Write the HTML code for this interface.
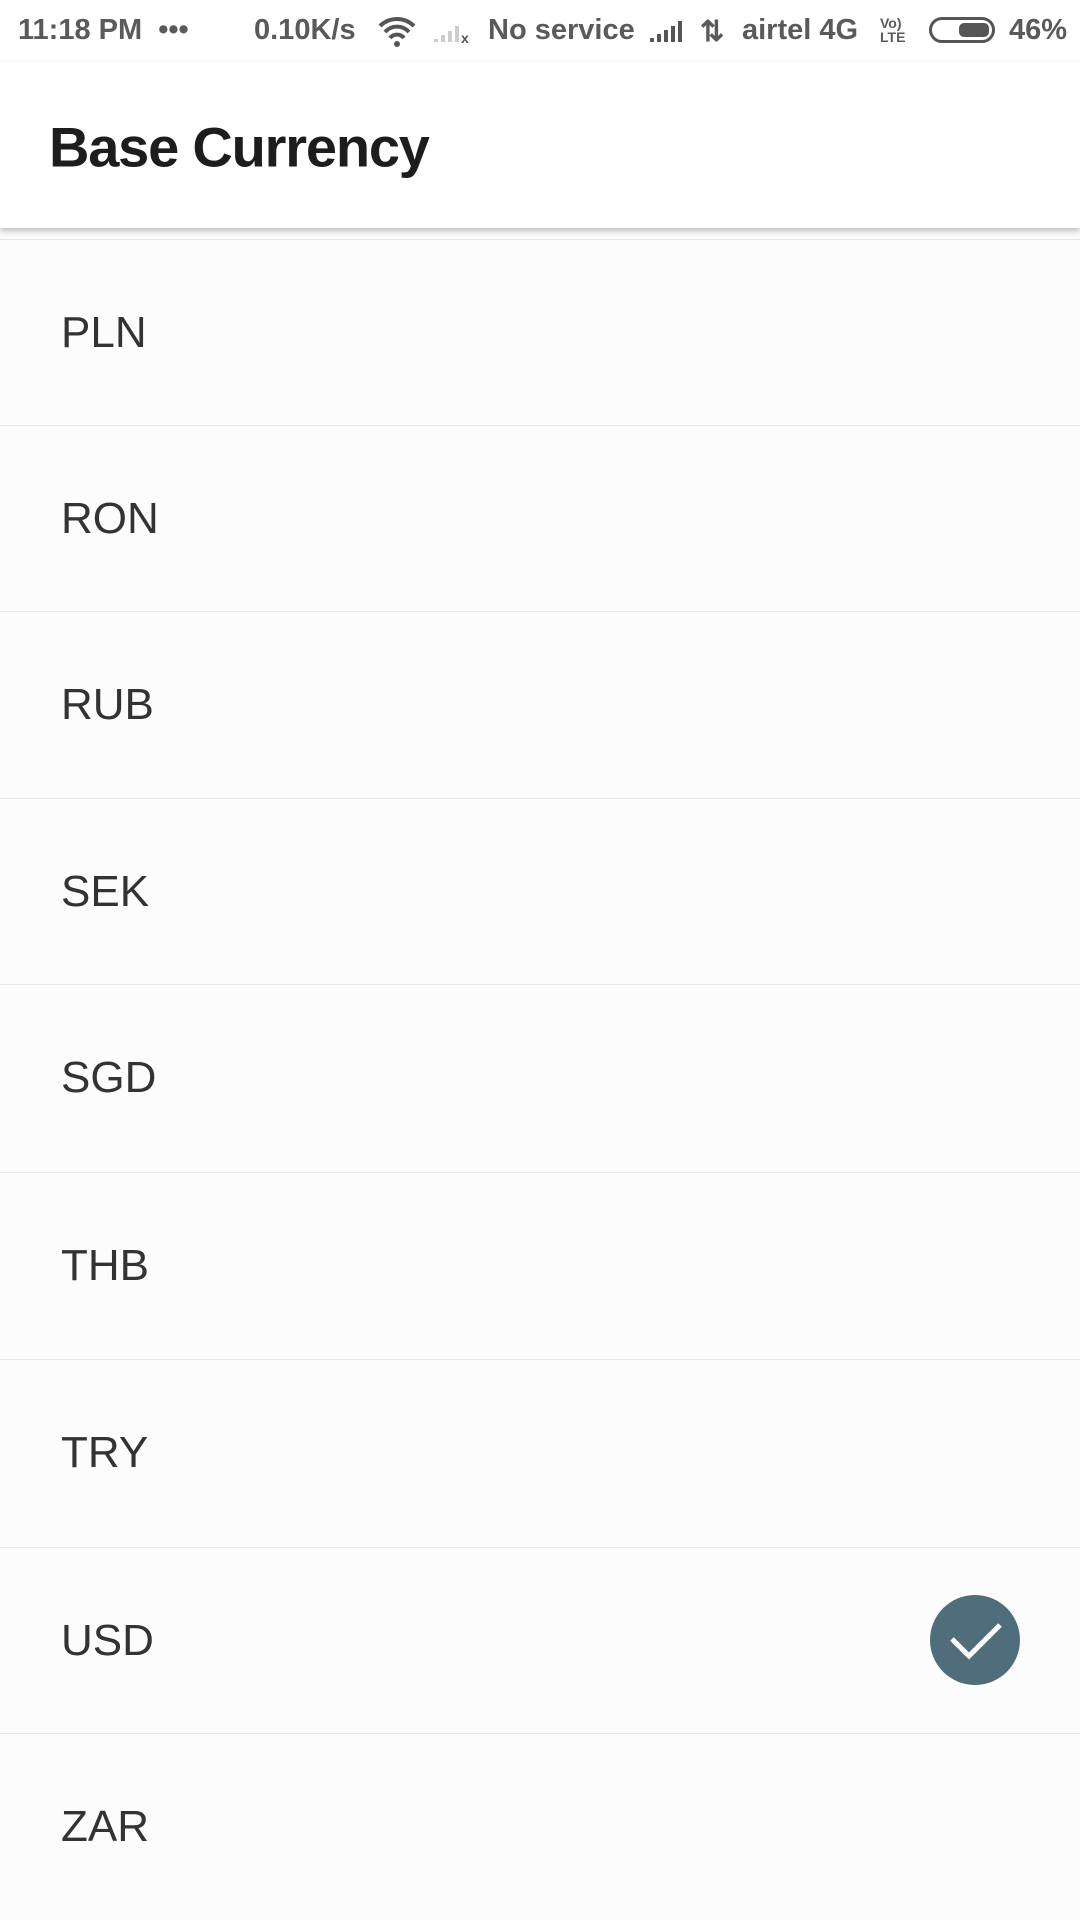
<!DOCTYPE html>
<html><head><meta charset="utf-8"><style>
body{margin:0;width:1080px;height:1920px;background:#fcfcfc;font-family:"Liberation Sans",Arial,sans-serif;overflow:hidden;position:relative}
.sb{position:absolute;top:0;left:0;width:1080px;height:62px;background:#fff;color:#5a5a5a;font-weight:bold;font-size:29px}
.sb span{position:absolute;top:14px}
.bar{position:absolute;top:62px;left:0;width:1080px;height:166px;background:#fff;box-shadow:0 3px 6px rgba(0,0,0,.25);z-index:2}
.bar h1{margin:0;position:absolute;left:49px;top:85px;transform:translateY(-50%);font-size:56px;font-weight:bold;color:#1d1d1d;letter-spacing:-1.2px}
.row{position:absolute;left:0;width:1080px;height:186px;border-top:1.5px solid #e8e8e8;font-size:44px;color:#333}
.row div{position:absolute;left:61px;top:50%;transform:translateY(-50%)}
.chk{position:absolute;left:930px;top:1595px;width:90px;height:90px;border-radius:50%;background:#4f6d7a}
</style></head><body>
<div class="sb">
<span style="left:18px">11:18 PM &nbsp;•••</span>
<span style="left:254px">0.10K/s</span>
<svg style="position:absolute;left:377px;top:14px" width="40" height="34" viewBox="0 0 40 34"><path d="M3 12 A24 24 0 0 1 37 12 M8 18 A16 16 0 0 1 32 18 M13 24 A9 9 0 0 1 27 24" fill="none" stroke="#555" stroke-width="4"/><circle cx="20" cy="30" r="3" fill="#555"/></svg>
<svg style="position:absolute;left:432px;top:20px" width="40" height="24"><path d="M2 22h4v-3h-4zM9 22h4v-7h-4zM16 22h4v-11h-4zM23 22h4v-16h-4z" fill="#ccc"/><text x="29" y="23" font-size="14" fill="#555">x</text></svg>
<span style="left:488px">No service</span>
<svg style="position:absolute;left:648px;top:18px" width="38" height="26"><path d="M2 24h4v-4h-4zM9 24h4v-8h-4zM16 24h4v-12h-4zM23 24h4v-16h-4zM30 24h4v-21h-4z" fill="#555"/></svg>
<span style="left:700px">⇅</span>
<span style="left:742px">airtel 4G</span>
<span style="left:880px;font-size:14px;top:16px;line-height:14px">Vo)<br>LTE</span>
<div style="position:absolute;left:929px;top:17px;width:66px;height:26px;border:3px solid #555;border-radius:14px;box-sizing:border-box"><div style="position:absolute;right:3px;top:3px;width:30px;height:14px;background:#555;border-radius:5px"></div></div>
<span style="left:1009px">46%</span>
</div>
<div class="bar"><h1>Base Currency</h1></div>
<div class="row" style="top:239px"><div>PLN</div></div>
<div class="row" style="top:425px"><div>RON</div></div>
<div class="row" style="top:611px"><div>RUB</div></div>
<div class="row" style="top:798px"><div>SEK</div></div>
<div class="row" style="top:984px"><div>SGD</div></div>
<div class="row" style="top:1172px"><div>THB</div></div>
<div class="row" style="top:1359px"><div>TRY</div></div>
<div class="row" style="top:1547px"><div>USD</div></div>
<div class="row" style="top:1733px"><div>ZAR</div></div>
<div class="chk"><svg width="90" height="90" viewBox="0 0 90 90"><path d="M22 44 L39 61 L70 30" fill="none" stroke="#fff" stroke-width="5"/></svg></div>
</body></html>
